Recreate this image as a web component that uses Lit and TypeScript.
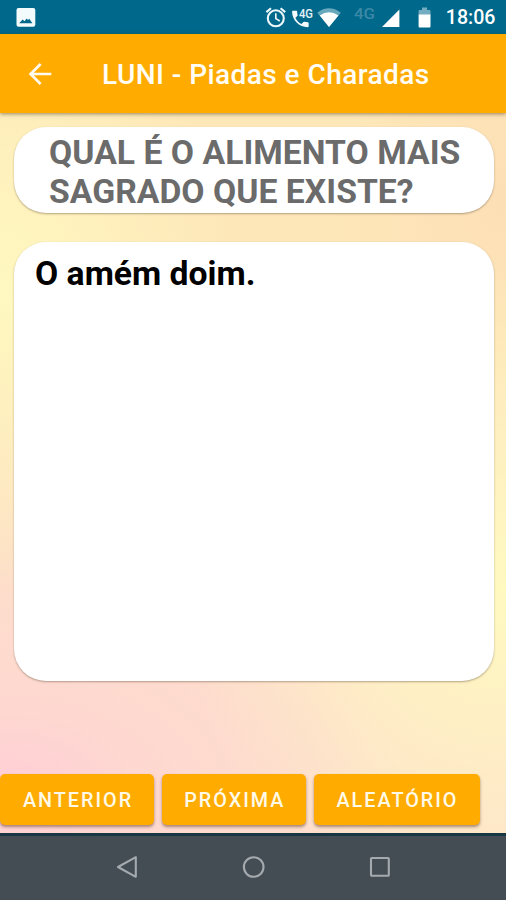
import { LitElement, html, css, svg } from "lit";
import { customElement, property } from "lit/decorators.js";

@customElement("status-bar")
class StatusBar extends LitElement {
  static styles = css`
    :host { display: flex; align-items: center; height: 34px; background: #00688b; color: #fff; flex: none; }
    .left { flex: 1; display: flex; padding-left: 16px; }
    svg { display: block; }
    .time { width: 61px; text-align: right; padding-right: 10.5px; box-sizing: border-box; font: 500 19.6px/34px Roboto, sans-serif; padding-top: 1px; height: 34px; white-space: nowrap; }
    .net { font: 500 12px Roboto, sans-serif; fill: #e6f4f8; }
    .dim { font: 500 15px Roboto, sans-serif; fill: #3b89a6; }
  `;
  render() {
    return html`
      <div class="left">
        <svg width="20" height="34" viewBox="0 0 20 34">
          <rect x="0.5" y="8" width="18.8" height="18.8" rx="2" fill="#f4fbfd" />
          <path d="M3.2 23.2L6.6 19.4L8.6 21.2L10.6 18.6L12 20L13.2 18.8L16.4 23.2Z" fill="#00688b" />
        </svg>
      </div>
      <svg width="183" height="34" viewBox="262 0 183 34">
        <g fill="none" stroke="#eef8fb" stroke-width="2.1">
          <circle cx="275.8" cy="18.3" r="8" />
          <path d="M275.8 13.3V18.6L279.8 21" stroke-width="1.6" />
          <path d="M266.4 12.1L271 8.3M280.6 8.3L285.2 12.1" />
        </g>
        <path transform="translate(289.3,8.4) scale(1.03)" fill="#f5fbfd"
          d="M17.9 13.4c-1.1 0-2.2-.2-3.2-.5-.3-.1-.7 0-.9.2l-2 2c-2.6-1.3-4.6-3.4-5.9-5.9l2-2c.3-.3.3-.6.2-.9-.3-1-.5-2.1-.5-3.2 0-.5-.4-.9-.9-.9H3.6c-.5 0-.9.4-.9.9 0 8.4 6.8 15.2 15.2 15.2.5 0 .9-.4.9-.9v-3.1c0-.5-.4-.9-.9-.9z" />
        <text class="net" x="299" y="17.6" textLength="14" lengthAdjust="spacingAndGlyphs">4G</text>
        <path d="M317.3 12.7Q329 4 340.8 12.7L329 27Z" fill="#68a8bd" />
        <path d="M319.8 15.4Q329 9 338.4 15.4L329 27Z" fill="#fff" />
        <text class="dim" x="354" y="18.6" textLength="21" lengthAdjust="spacingAndGlyphs">4G</text>
        <path d="M399.4 9.5V27H382Z" fill="#fff" />
        <path d="M418.6 15V11q0-1 1-1h2.4V7.6h5.1V10h2.4q1 0 1 1v4z" fill="#74adc1" />
        <path d="M418.6 14.5h11.9V26.5q0 1-1 1h-9.9q-1 0-1-1z" fill="#fff" />
      </svg>
      <div class="time">18:06</div>`;
  }
}

@customElement("app-toolbar")
class AppToolbar extends LitElement {
  @property() heading = "";
  static styles = css`
    :host { display: flex; align-items: center; height: 79px; background: #ffab00; color: #fffdf4; flex: none; box-shadow: 0 1px 4px rgba(70, 50, 20, 0.55); z-index: 1; position: relative; }
    svg { display: block; margin-left: 27px; }
    .title { margin-left: 49px; font: 500 28px/32px Roboto, sans-serif; white-space: nowrap; letter-spacing: 0.44px; padding-top: 3px; }
  `;
  render() {
    return html`
      <svg width="26" height="26" viewBox="0 0 26 26" fill="none" stroke="#fffaf0" stroke-width="2.7">
        <path d="M24.3 13H4M13.6 3L3.6 13L13.6 23" />
      </svg>
      <div class="title">${this.heading}</div>`;
  }
}

@customElement("nav-bar")
class NavBar extends LitElement {
  static styles = css`
    :host { display: flex; height: 67px; box-sizing: border-box; flex: none; background: #454d54; border-top: 3px solid #183643; align-items: center; justify-content: center; gap: 99.5px; padding-bottom: 4px; }
    svg { display: block; }
  `;
  render() {
    const shapes = [
      svg`<path d="M22.8 4.2V23.8L5 14Z" />`,
      svg`<circle cx="13.7" cy="14" r="9.8" />`,
      svg`<rect x="5" y="5" width="17.8" height="17.8" rx="0.8" />`,
    ];
    return shapes.map((s) => html`
      <svg width="27" height="27" viewBox="0 0 27 27" fill="none" stroke="#a4aaae" stroke-width="2.1" stroke-linejoin="round">${s}</svg>`);
  }
}

@customElement("app-root")
class AppRoot extends LitElement {
  static styles = css`
    :host { display: flex; flex-direction: column; width: 506px; height: 900px; overflow: hidden; font-family: Roboto, sans-serif; }
    main {
      flex: 1; min-height: 0; display: flex; flex-direction: column; padding-top: 14px; box-sizing: border-box;
      background:
        radial-gradient(ellipse 400px 230px at 0% 94%, #ffcdd6 0%, rgba(255, 210, 212, 0.6) 35%, rgba(254, 218, 206, 0) 100%),
        radial-gradient(ellipse 240px 290px at 0% 25%, #fff8c0 0%, rgba(255, 247, 190, 0) 100%),
        radial-gradient(ellipse 330px 330px at 100% 66%, #fffac0 0%, rgba(255, 248, 192, 0) 100%),
        radial-gradient(ellipse 180px 200px at 100% 12%, #fddfb6 0%, rgba(253, 223, 182, 0) 100%),
        linear-gradient(#fee8b8, #fde6b9 30%, #fddfcb 70%, #fde1cb);
    }
    .card { margin: 0 12px 0 14px; background: #fff; border-radius: 32px; box-sizing: border-box; box-shadow: 0 1px 2px rgba(90, 70, 50, 0.45); }
    .question { height: 86px; padding: 5.5px 0 0 35px; font-weight: 700; font-size: 33.7px; line-height: 39.5px; letter-spacing: 0.03px; color: #6b6b6b; white-space: nowrap; }
    .answer { height: 439px; margin-top: 29px; padding: 12px 0 0 21px; font-weight: 700; font-size: 33.7px; line-height: 39.5px; color: #000; }
    .actions { display: flex; gap: 7.5px; margin-top: auto; margin-bottom: 8px; }
    button { height: 51px; border: 0; padding: 3px 0 0 2px; border-radius: 5px; background: #ffab00; color: #fffae8; font: 500 19.8px/24px Roboto, sans-serif; letter-spacing: 2px; box-shadow: 0 2px 3px rgba(90, 50, 30, 0.5); }
    .prev { width: 154px; }
    .next { width: 144.5px; }
    .random { width: 166px; }
  `;
  render() {
    return html`
      <status-bar></status-bar>
      <app-toolbar heading="LUNI - Piadas e Charadas"></app-toolbar>
      <main>
        <div class="card question">QUAL É O ALIMENTO MAIS<br />SAGRADO QUE EXISTE?</div>
        <div class="card answer">O amém doim.</div>
        <div class="actions">
          <button class="prev">ANTERIOR</button>
          <button class="next">PRÓXIMA</button>
          <button class="random">ALEATÓRIO</button>
        </div>
      </main>
      <nav-bar></nav-bar>`;
  }
}
